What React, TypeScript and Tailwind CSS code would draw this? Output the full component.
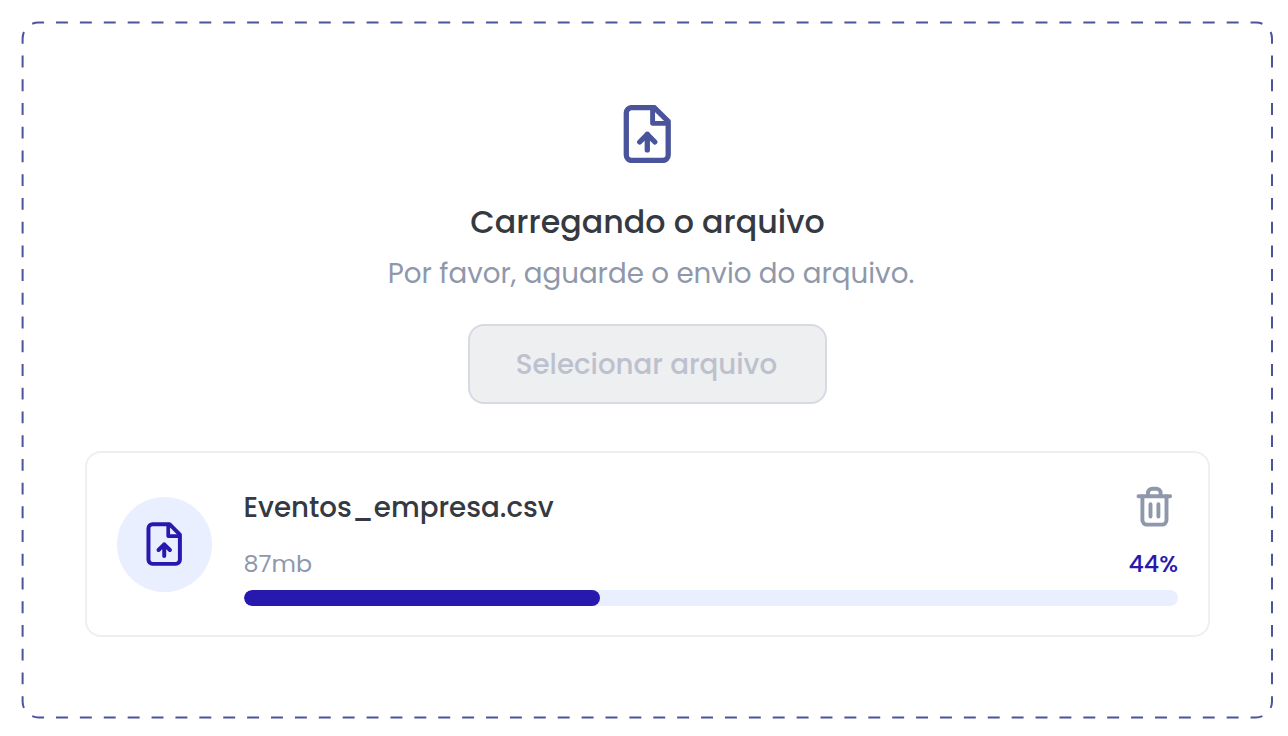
const upload = {
  name: 'Eventos_empresa.csv',
  size: '87mb',
  percent: '44%',
  barWidth: 356.5,
};

function FileUploadIcon({ className }: { className: string }) {
  return (
    <svg viewBox="-0.5 0 48 58" fill="none" stroke="currentColor" className={className}>
      <path
        d="M30.8 2.6H8.2a5.4 5.4 0 0 0-5.4 5.4v42.1a5.4 5.4 0 0 0 5.4 5.4h31.1a5.4 5.4 0 0 0 5.4-5.4V16.4Z"
        strokeWidth="5.3"
        strokeLinejoin="round"
      />
      <path d="M29.1 3v15.4h15" strokeWidth="4.9" strokeLinejoin="round" />
      <path
        d="M23.8 44.9V29.2M16.2 37l7.6-7.6 7.6 7.6"
        strokeWidth="5.3"
        strokeLinecap="round"
        strokeLinejoin="round"
      />
    </svg>
  );
}

function TrashIcon({ className }: { className: string }) {
  return (
    <svg viewBox="0 0 36 41" fill="none" stroke="currentColor" strokeWidth="3.9" strokeLinecap="round" className={className}>
      <path d="M2.5 10.3h31.6" />
      <path d="M12 10V7a4.3 4.3 0 0 1 4.3-4.3h4a4.3 4.3 0 0 1 4.3 4.3v3" />
      <path d="M6.4 10.5v23.6a4.5 4.5 0 0 0 4.5 4.5H26a4.5 4.5 0 0 0 4.5-4.5V10.5" />
      <path d="M14.5 18.3v12.2M22.4 18.3v12.2" />
    </svg>
  );
}

// Every side runs from the middle of one corner to the middle of the next
function DashedFrame() {
  return (
    <svg
      viewBox="0 0 1288 736"
      fill="none"
      stroke="#4a549b"
      strokeWidth="2"
      strokeDasharray="0.5 0.5"
      strokeDashoffset="0.75"
      className="pointer-events-none absolute inset-0 h-full w-full"
    >
      <path pathLength="52" d="M27.3 27.1A16 16 0 0 1 38.6 22.4H1256A16 16 0 0 1 1267.3 27.1" />
      <path pathLength="29" d="M1267.3 27.1A16 16 0 0 1 1272 38.4V701.5A16 16 0 0 1 1267.3 712.8" />
      <path pathLength="52" d="M27.3 712.8A16 16 0 0 0 38.6 717.5H1256A16 16 0 0 0 1267.3 712.8" />
      <path pathLength="29" d="M27.3 27.1A16 16 0 0 0 22.6 38.4V701.5A16 16 0 0 0 27.3 712.8" />
    </svg>
  );
}

export default function App() {
  return (
    <main className="relative flex h-[736px] w-[1288px] flex-col items-center overflow-hidden bg-white pl-[7px] pt-[105px] font-['Poppins','Inter',sans-serif] whitespace-nowrap">
      <DashedFrame />

      <FileUploadIcon className="mr-px h-[58px] w-12 text-[#4a549b]" />

      <h1 className="mt-[35px] text-[31.7px] font-medium leading-[48px] text-[#343942]">
        Carregando o arquivo
      </h1>
      <p className="mt-1.5 pl-[7px] text-[27.72px] leading-[44px] text-[#8f98ab]">
        Por favor, aguarde o envio do arquivo.
      </p>

      <button
        disabled
        className="mt-7 h-20 w-[359px] rounded-2xl border-2 border-[#d7dae3] bg-[#eeeff1] pr-0.5 pt-0.5 text-[27.7px] font-medium text-[#bdc1ce]"
      >
        Selecionar arquivo
      </button>

      <section className="mt-[47px] flex h-[186px] w-[1125px] items-center gap-8 rounded-2xl border-2 border-[#eeeff1] pl-[29.5px] pr-[30px]">
        <div className="flex size-[95px] shrink-0 items-center justify-center rounded-full bg-[#e9effe]">
          <FileUploadIcon className="mr-px h-11 w-9 text-[#2719ae]" />
        </div>

        <div className="flex-1 pt-1">
          <div className="flex h-[41px] items-center justify-between pr-1.5">
            <h2 className="pt-px text-[27.7px] font-medium leading-[41px] text-[#343942]">{upload.name}</h2>
            <TrashIcon className="mb-0.5 h-[41px] w-9 shrink-0 text-[#8f98ab]" />
          </div>
          <div className="mt-[18px] flex h-9 items-center justify-between text-[23.75px]">
            <span className="text-[#8f98ab]">{upload.size}</span>
            <span className="font-medium text-[#2719ae]">{upload.percent}</span>
          </div>
          <div className="mt-2 h-4 overflow-hidden rounded-full bg-[#e9effe]">
            <div className="h-full rounded-full bg-[#2719ae]" style={{ width: upload.barWidth }} />
          </div>
        </div>
      </section>
    </main>
  );
}
